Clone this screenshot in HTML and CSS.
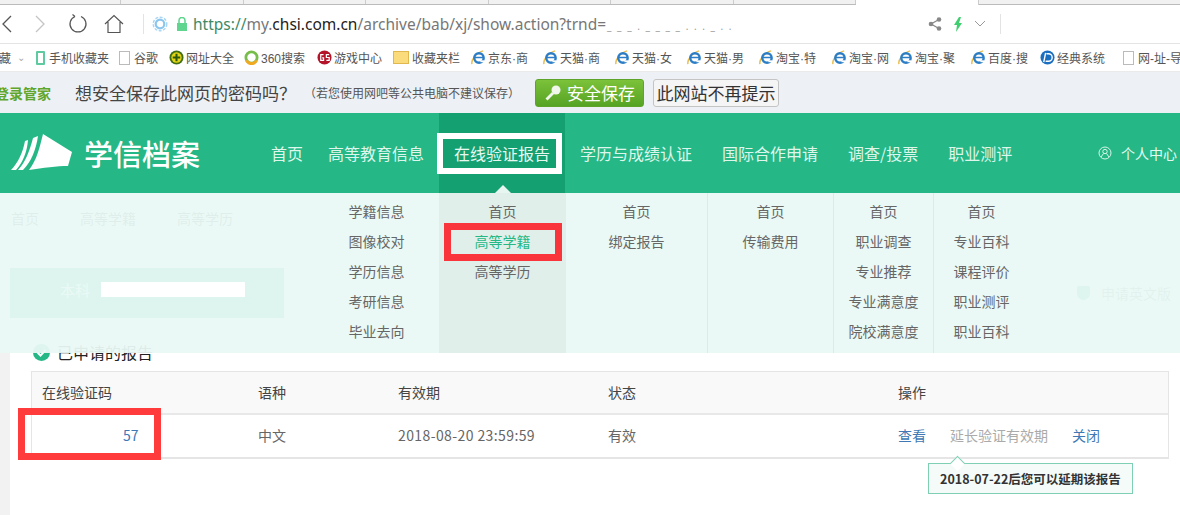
FILE: index.html
```html
<!DOCTYPE html>
<html lang="zh-CN">
<head>
    <meta charset="UTF-8">
    <title>学信档案</title>
    <link rel="stylesheet" href="styles.css">
</head>
<body>

    <svg class="defs" width="0" height="0">
        <symbol id="ie" viewBox="0 0 16 16">
            <path d="M1 15C0 11 5 3 13 1" fill="none" stroke="#e9bd4c" stroke-width="1.500"/>
            <circle cx="8.500" cy="8.500" r="5" fill="none" stroke="#2b7ec6" stroke-width="2.600"/>
            <path d="M4 8h9" stroke="#2b7ec6" stroke-width="1.600"/>
            <path d="M10 11h4v2h-4z" fill="#fff"/>
        </symbol>
    </svg>

    <div class="tabstrip">
        <span class="tab"></span>
        <span class="tab"></span>
        <span class="tab"></span>
        <span class="tab"></span>
        <span class="tab"></span>
        <span class="tab"></span>
        <span class="tab"></span>
        <span class="tab tab-active"></span>
    </div>

    <div class="toolbar">
        <svg class="nav-back" width="14" height="20" viewBox="0 0 14 20"><path d="M11 2 3 10l8 8" fill="none" stroke="#555" stroke-width="1.300"/></svg>
        <svg class="nav-forward" width="14" height="20" viewBox="0 0 14 20"><path d="M3 2l8 8-8 8" fill="none" stroke="#c4c4c4" stroke-width="1.300"/></svg>
        <svg class="nav-reload" width="20" height="20" viewBox="0 0 20 20"><path d="M7 2.500a8 8 0 1 0 6 0M7 2.500 4.500 .5M7 2.500 4 4.500" fill="none" stroke="#555" stroke-width="1.200"/></svg>
        <svg class="nav-home" width="20" height="20" viewBox="0 0 20 20"><path d="M1 10 10 1.500 19 10M4 8v10.500h12V8" fill="none" stroke="#555" stroke-width="1.200"/></svg>
        <span class="toolbar-sep"></span>
        <svg class="gear-icon" width="16" height="16" viewBox="0 0 16 16"><circle cx="8" cy="8" r="6.800" fill="none" stroke="#a9d6f4" stroke-width="1.400" stroke-dasharray="3 1.500"/><circle cx="8" cy="8" r="4.300" fill="#fff" stroke="#8cc6ee" stroke-width="2.200"/></svg>
        <svg class="lock-icon" width="12" height="14" viewBox="0 0 12 14"><rect x="1" y="6" width="10" height="8" fill="#5fd58f"/><path d="M3 6V3.500a3 3 0 0 1 6 0V6" fill="none" stroke="#5fd58f" stroke-width="1.500"/></svg>
        <div class="url"><span class="url-scheme">https://</span><span class="url-sub">my.</span><span class="url-host">chsi.com.cn</span><span class="url-sub">/archive/bab/xj/show.action?trnd=</span><span class="url-cut">_ _ _ . _ _ _ _ . . . _ . .</span></div>
        <svg class="share-icon" width="14" height="14" viewBox="0 0 14 14"><path d="M11 2.500 3 7l8 4.500" fill="none" stroke="#888" stroke-width="1.300"/><circle cx="11" cy="2.500" r="2.300" fill="#888"/><circle cx="3" cy="7" r="2.300" fill="#888"/><circle cx="11" cy="11.500" r="2.300" fill="#888"/></svg>
        <svg class="bolt-icon" width="10" height="15" viewBox="0 0 10 15"><path d="M6 0 1 8h3L3 15l6-9H6l2-6z" fill="#3fcf6f"/></svg>
        <svg class="chevron-icon" width="12" height="8" viewBox="0 0 12 8"><path d="M1 1l5 5 5-5" fill="none" stroke="#999"/></svg>
        <span class="toolbar-sep toolbar-sep-end"></span>
    </div>

    <div class="bookmarks">
        <span class="mark mark-cut">藏<i class="mark-arrow">⌄</i></span>
        <span class="mark w83"><i class="ico ico-phone"></i>手机收藏夹</span>
        <span class="mark w50"><i class="ico ico-doc"></i>谷歌</span>
        <span class="mark w75">
            <svg class="ico" viewBox="0 0 16 16"><circle cx="8" cy="8" r="7.500" fill="#3f6f12"/><circle cx="8" cy="8" r="5.500" fill="#e3d516"/><path d="M8 4v8M4 8h8" stroke="#2c5a0c" stroke-width="2.200"/></svg>网址大全
        </span>
        <span class="mark w73">
            <svg class="ico" viewBox="0 0 16 16"><circle cx="8" cy="8" r="6" fill="none" stroke="#76bd4a" stroke-width="3"/><path d="M2.500 11a6 6 0 0 0 11 0" fill="none" stroke="#f2a922" stroke-width="3"/></svg>360搜索
        </span>
        <span class="mark w76">
            <svg class="ico" viewBox="0 0 16 16"><circle cx="8" cy="8" r="7.500" fill="#b4142a"/><path d="M7 5H4v6h3V8.500H5.500M13 5h-3v3h3v3h-3" fill="none" stroke="#fff" stroke-width="1.300"/></svg>游戏中心
        </span>
        <span class="mark w78"><i class="ico ico-folder"></i>收藏夹栏</span>
        <span class="mark w72"><svg class="ico"><use href="#ie"/></svg>京东·商</span>
        <span class="mark w72"><svg class="ico"><use href="#ie"/></svg>天猫·商</span>
        <span class="mark w72"><svg class="ico"><use href="#ie"/></svg>天猫·女</span>
        <span class="mark w72"><svg class="ico"><use href="#ie"/></svg>天猫·男</span>
        <span class="mark w73"><svg class="ico"><use href="#ie"/></svg>淘宝·特</span>
        <span class="mark w66"><svg class="ico"><use href="#ie"/></svg>淘宝·网</span>
        <span class="mark w73"><svg class="ico"><use href="#ie"/></svg>淘宝·聚</span>
        <span class="mark w69"><svg class="ico"><use href="#ie"/></svg>百度·搜</span>
        <span class="mark w83">
            <svg class="ico" viewBox="0 0 16 16"><circle cx="8" cy="8" r="7.500" fill="#1a6fc0"/><path d="M6 3 4 13M7 4h2a4 4 0 0 1 0 8H6" fill="none" stroke="#fff" stroke-width="1.500"/></svg>经典系统
        </span>
        <span class="mark"><i class="ico ico-doc"></i>网-址-导</span>
    </div>

    <div class="savebar">
        <span class="savebar-brand">登录管家</span>
        <span class="savebar-ask">想安全保存此网页的密码吗？</span>
        <span class="savebar-note">（若您使用网吧等公共电脑不建议保存）</span>
        <button class="btn-save">
            <svg width="18" height="18" viewBox="0 0 18 18"><circle cx="12" cy="6" r="4.500" fill="#f2f7ec"/><path d="M9 9 2.500 15.500" stroke="#f2f7ec" stroke-width="2.800"/></svg>
            安全保存
        </button>
        <button class="btn-never">此网站不再提示</button>
    </div>

    <div class="site">
        <header class="site-head">
            <svg class="logo-mark" width="62" height="38" viewBox="0 0 62 38"><path d="M0 36C7 29 12 18 14 7l3-1C16 18 12 28 5 36ZM7 36C14 29 19 16 22 4l5-2C25 16 20 28 12 36ZM18 36C26 26 29 12 32 0L61 18 57 32C46 32 32 34 18 36Z" fill="#fff"/></svg>
            <span class="logo-text">学信档案</span>
            <nav class="main-nav">
                <a class="nav-item">首页</a>
                <a class="nav-item">高等教育信息</a>
                <a class="nav-item nav-active"><span class="nav-active-label">在线验证报告</span></a>
                <a class="nav-item">学历与成绩认证</a>
                <a class="nav-item">国际合作申请</a>
                <a class="nav-item">调查/投票</a>
                <a class="nav-item">职业测评</a>
            </nav>
            <div class="user-link">
                <svg width="14" height="14" viewBox="0 0 14 14"><circle cx="7" cy="7" r="6" fill="none" stroke="#d8f5e8"/><circle cx="7" cy="5.500" r="2.200" fill="none" stroke="#d8f5e8"/><path d="M3 11l2.500-3.500M11 11 8.500 7.500" stroke="#d8f5e8"/></svg>
                个人中心
            </div>
        </header>

        <main class="content">
            <div class="crumbs"><span>首页</span><span>高等学籍</span><span>高等学历</span></div>
            <div class="content-row">
                <div class="banner"><span>本科</span><i class="redact"></i></div>
                <div class="english"><i class="english-ico"></i>申请英文版</div>
            </div>
            <h2 class="section-title">
                <svg class="check" width="17" height="17" viewBox="0 0 17 17"><circle cx="8.500" cy="8.500" r="8.500" fill="#25b886"/><path d="M4.500 8.500l3 3 5-5.500" fill="none" stroke="#fff" stroke-width="2"/></svg>
                已申请的报告
            </h2>
            <div class="report-table">
                <div class="row row-head">
                    <span class="col-code">在线验证码</span>
                    <span class="col-lang">语种</span>
                    <span class="col-date">有效期</span>
                    <span class="col-state">状态</span>
                    <span class="col-ops">操作</span>
                </div>
                <div class="row row-body">
                    <span class="col-code code-value"><a>57</a></span>
                    <span class="col-lang">中文</span>
                    <span class="col-date date-value">2018-08-20 23:59:59</span>
                    <span class="col-state">有效</span>
                    <span class="col-ops">
                        <a>查看</a>
                        <span class="op-disabled">延长验证有效期</span>
                        <a>关闭</a>
                    </span>
                </div>
            </div>
            <div class="tip">2018-07-22后您可以延期该报告</div>
            <span class="mark-code"></span>
        </main>

        <div class="dropdown">
            <div class="drop-col"><a>学籍信息</a><a>图像校对</a><a>学历信息</a><a>考研信息</a><a>毕业去向</a></div>
            <div class="drop-col drop-active">
                <a>首页</a>
                <a class="drop-current">高等学籍</a>
                <a>高等学历</a>
                <span class="drop-arrow"></span>
            </div>
            <div class="drop-col"><a>首页</a><a>绑定报告</a></div>
            <div class="drop-col drop-line"><a>首页</a><a>传输费用</a></div>
            <div class="drop-col drop-line"><a>首页</a><a>职业调查</a><a>专业推荐</a><a>专业满意度</a><a>院校满意度</a></div>
            <div class="drop-col drop-line"><a>首页</a><a>专业百科</a><a>课程评价</a><a>职业测评</a><a>职业百科</a></div>
        </div>
    </div>

</body>
</html>
```

FILE: styles.css
```css
* {
    margin: 0;
    padding: 0;
    box-sizing: border-box;
}
html, body {
    width: 1180px;
    height: 515px;
    overflow: hidden;
}
body {
    background: #fff;
    font-family: "Noto Sans CJK SC", "Liberation Sans", sans-serif;
    font-size: 14px;
    color: #555;
}
a, i {
    font-style: normal;
}
.defs {
    position: absolute;
}

/* browser chrome */
.tabstrip {
    display: flex;
    height: 5px;
    background: #f1f1f1;
    border-bottom: 1px solid #bbb;
}
.tab {
    width: 122.500px;
    border-right: 1px solid #ccc;
}
.tab:first-child {
    width: 121px;
}
.tab-active {
    height: 5px;
    background: #fff;
}
.toolbar {
    height: 38px;
    display: flex;
    align-items: center;
    background: #fff;
}
.toolbar svg {
    flex: none;
}
.nav-forward { margin-left: 19px; }
.nav-reload { margin-left: 21px; }
.nav-home { margin-left: 16px; }
.toolbar-sep {
    width: 1px;
    height: 20px;
    background: #e3e3e3;
    margin-left: 19px;
}
.gear-icon { margin-left: 8px; }
.lock-icon { margin-left: 8px; }
.url {
    margin-left: 5px;
    width: 735px;
    font-family: "Noto Sans", "Liberation Sans", sans-serif;
    font-size: 15.500px;
    white-space: nowrap;
    overflow: hidden;
}
.url-scheme { color: #3c8a68; }
.url-sub { color: #777; }
.url-host { color: #222; }
.url-cut {
    color: #999;
    font-size: 10px;
    letter-spacing: 1.500px;
    margin-left: 1px;
}
.bolt-icon { margin-left: 11px; }
.chevron-icon { margin-left: 11px; }
.toolbar-sep-end { margin-left: 14px; }

.bookmarks {
    height: 29px;
    display: flex;
    align-items: center;
    background: #fff;
    border-top: 1px solid #e4e4e4;
    border-bottom: 1px solid #eaeaea;
    font-family: "Liberation Sans", "Noto Sans CJK SC", sans-serif;
    font-size: 12px;
    color: #555;
    white-space: nowrap;
    overflow: hidden;
}
.mark {
    display: flex;
    align-items: center;
    flex: none;
}
.w50 { width: 50px; }
.w66 { width: 66px; }
.w69 { width: 69px; }
.w72 { width: 72px; }
.w73 { width: 73px; }
.w75 { width: 75px; }
.w76 { width: 76px; }
.w78 { width: 78px; }
.w83 { width: 83px; }
.mark-cut {
    width: 37px;
    margin-left: -1px;
}
.mark-arrow {
    color: #aaa;
    font-size: 10px;
    margin-left: 6px;
}
.ico {
    flex: none;
    width: 15px;
    height: 15px;
    margin-right: 2px;
}
.ico-phone {
    width: 9px;
    height: 14px;
    margin-right: 4px;
    border: 2px solid #5fc9a0;
    border-radius: 1px;
}
.ico-doc {
    width: 11px;
    height: 14px;
    margin-right: 4px;
    background: #fff;
    border: 1px solid #bbb;
}
.ico-folder {
    width: 16px;
    height: 13px;
    margin-right: 3px;
    background: #fbdc7c;
    border: 1px solid #e0b84e;
}

.savebar {
    height: 41px;
    display: flex;
    align-items: center;
    background: #edf1f5;
    white-space: nowrap;
}
.savebar-brand {
    flex: none;
    width: 80px;
    margin-left: -5px;
    font-size: 14px;
    font-weight: 700;
    color: #5fa62e;
}
.savebar-ask {
    font-size: 17px;
    color: #444;
}
.savebar-note {
    flex: none;
    width: 231px;
    margin-left: 8px;
    font-size: 12px;
    color: #555;
}
.btn-save {
    flex: none;
    width: 109px;
    height: 28px;
    display: flex;
    align-items: center;
    justify-content: center;
    gap: 5px;
    border: 1px solid #5fa42a;
    border-radius: 3px;
    background: linear-gradient(#7cc23a, #56a324);
    color: #fff;
    font-family: inherit;
    font-size: 17px;
}
.btn-never {
    flex: none;
    width: 126px;
    height: 28px;
    margin-left: 9px;
    padding: 0;
    border: 1px solid #c4c4c4;
    border-radius: 3px;
    background: #f5f5f5;
    color: #333;
    font-family: inherit;
    font-size: 17px;
}

/* site */
.site {
    position: relative;
    height: 402px;
}
.site-head {
    height: 80px;
    display: flex;
    align-items: center;
    background: #25b886;
    color: #e6f8f0;
}
.logo-mark {
    margin-left: 11px;
    flex: none;
}
.logo-text {
    flex: none;
    width: 116px;
    margin-left: 11px;
    color: #fff;
    font-size: 29px;
    font-weight: 500;
    white-space: nowrap;
    line-height: 1;
}
.main-nav {
    display: flex;
    height: 80px;
    margin-left: 56px;
    font-size: 16px;
    white-space: nowrap;
}
.nav-item {
    display: flex;
    align-items: center;
    padding: 0 15px;
    color: #def6ec;
}
.nav-item:first-child {
    margin-right: -5px;
}
.nav-active {
    width: 126px;
    padding: 0;
    background: #14a070;
}
.nav-active-label {
    width: 125px;
    height: 41px;
    flex: none;
    display: flex;
    align-items: center;
    justify-content: center;
    margin-left: -2px;
    padding-left: 5px;
    background: #14a070;
    border: 6px solid #fff;
    color: #e6f8f0;
}
.user-link {
    display: flex;
    align-items: center;
    gap: 9px;
    margin-left: auto;
    margin-right: 3px;
    white-space: nowrap;
}

.content {
    position: relative;
    height: 322px;
    margin-left: 10px;
    background: #fff;
    box-shadow: -10px 0 0 #f2f2f2;
}
.crumbs {
    display: flex;
    gap: 41px;
    padding: 15px 0 0 1px;
    color: #444;
    line-height: 20px;
}
.content-row {
    display: flex;
    justify-content: space-between;
    margin-top: 40px;
}
.banner {
    width: 274px;
    height: 50px;
    display: flex;
    padding: 14px 0 0 50px;
    background: #25b886;
    color: #fff;
    font-size: 15px;
    line-height: 15px;
}
.redact {
    position: relative;
    z-index: 2;
    width: 144px;
    height: 15px;
    background: #fff;
    margin-left: 11px;
}
.english {
    display: flex;
    align-items: center;
    gap: 11px;
    margin-right: 9px;
    color: #777;
}
.english-ico {
    width: 13px;
    height: 14px;
    background: #25b886;
    border-radius: 2px 2px 7px 7px;
}
.section-title {
    display: flex;
    align-items: center;
    gap: 7px;
    height: 20px;
    margin: 24px 0 0 23px;
    font-size: 16px;
    font-weight: 400;
    color: #222;
}
.report-table {
    width: 1138px;
    margin: 9px 0 0 21px;
    border: 1px solid #e5e5e5;
    border-bottom-width: 2px;
}
.row {
    display: flex;
    align-items: center;
    padding-bottom: 2px;
}
.row-head {
    height: 43px;
    background: #f8f9f8;
    border-bottom: 2px solid #e8e8e8;
    color: #444;
}
.row-body {
    height: 42px;
    color: #666;
    background: #fff;
}
.col-code {
    width: 226px;
    padding-left: 10px;
}
.code-value {
    padding-left: 91px;
}
.col-lang { width: 140px; }
.col-date { width: 210px; }
.date-value { letter-spacing: 0.400px; }
.col-state { width: 290px; }
.col-ops {
    display: flex;
    gap: 24px;
}
.col-ops a, .code-value a {
    color: #3f78b4;
}
.op-disabled {
    color: #aaa;
}
.tip {
    position: absolute;
    left: 918px;
    top: 270px;
    width: 205px;
    height: 31px;
    display: flex;
    align-items: center;
    justify-content: center;
    background: #f5fbf8;
    border: 1px solid #7fd0b2;
    color: #333;
    font-size: 12.500px;
    font-weight: 700;
    white-space: nowrap;
}
.tip::before {
    content: "";
    position: absolute;
    left: 23px;
    top: -6px;
    width: 10px;
    height: 10px;
    background: #fff;
    border-left: 1px solid #7fd0b2;
    border-top: 1px solid #7fd0b2;
    transform: rotate(45deg);
}
.mark-code {
    position: absolute;
    left: 8px;
    top: 215px;
    width: 143px;
    height: 52px;
    border: 7px solid #ff3b3b;
}

/* dropdown lies over the page */
.dropdown {
    position: absolute;
    left: 0;
    top: 80px;
    width: 1180px;
    height: 160px;
    display: flex;
    padding-left: 314px;
    background: rgba(233, 249, 244, 0.94);
}
.drop-col {
    position: relative;
    display: flex;
    flex-direction: column;
    padding-top: 3px;
}
.drop-col:nth-child(1) { width: 125px; }
.drop-col:nth-child(2) { width: 127px; }
.drop-col:nth-child(3) { width: 141px; }
.drop-col:nth-child(4) { width: 126px; }
.drop-col:nth-child(5) { width: 100px; }
.drop-col:nth-child(6) { width: 96px; }
.drop-col a {
    height: 30px;
    line-height: 30px;
    text-align: center;
    color: #666;
    white-space: nowrap;
}
.drop-line {
    border-left: 1px solid #dcebe5;
}
.drop-active {
    background: #e1efea;
}
.drop-col .drop-current {
    position: relative;
    color: #25b886;
}
.drop-current::after {
    content: "";
    box-sizing: border-box;
    position: absolute;
    left: 5px;
    top: -3px;
    width: 118px;
    height: 38px;
    border: 7px solid #f9343b;
}
.drop-arrow {
    position: absolute;
    left: 50%;
    top: -8px;
    margin-left: -8px;
    border-left: 8px solid transparent;
    border-right: 8px solid transparent;
    border-bottom: 8px solid #e8f6f1;
}
```
